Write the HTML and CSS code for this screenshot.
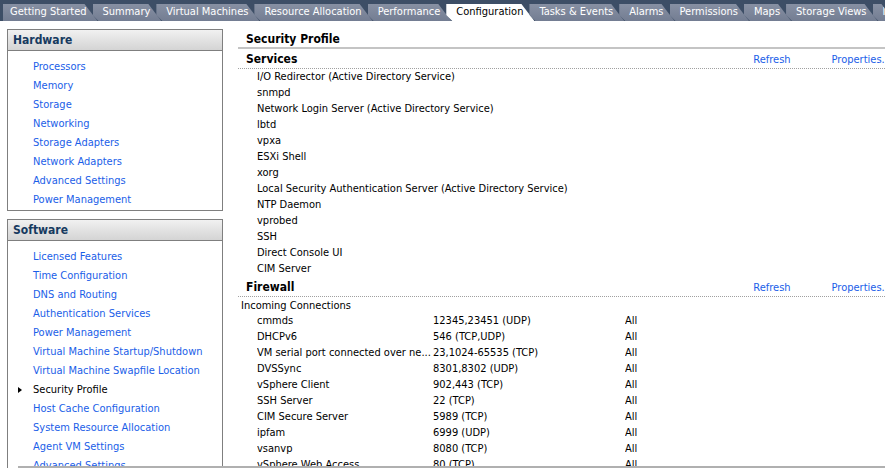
FILE: index.html
```html
<!DOCTYPE html>
<html lang="en">
<head>
    <meta charset="UTF-8">
    <title>Configuration - Security Profile</title>
    <link rel="stylesheet" href="styles.css">
</head>
<body>
    <div class="tab-bar">
        <div class="tab first">Getting Started</div>
        <div class="tab">Summary</div>
        <div class="tab">Virtual Machines</div>
        <div class="tab">Resource Allocation</div>
        <div class="tab">Performance</div>
        <div class="tab active">Configuration</div>
        <div class="tab">Tasks &amp; Events</div>
        <div class="tab">Alarms</div>
        <div class="tab">Permissions</div>
        <div class="tab">Maps</div>
        <div class="tab">Storage Views</div>
        <div class="tab more">I&#9666;</div>
    </div>

    <div class="page">
        <div class="sidebar">
            <div class="box">
                <div class="box-header">Hardware</div>
                <ul class="nav">
                    <li><a>Processors</a></li>
                    <li><a>Memory</a></li>
                    <li><a>Storage</a></li>
                    <li><a>Networking</a></li>
                    <li><a>Storage Adapters</a></li>
                    <li><a>Network Adapters</a></li>
                    <li><a>Advanced Settings</a></li>
                    <li><a>Power Management</a></li>
                </ul>
            </div>
            <div class="box software">
                <div class="box-header">Software</div>
                <ul class="nav">
                    <li><a>Licensed Features</a></li>
                    <li><a>Time Configuration</a></li>
                    <li><a>DNS and Routing</a></li>
                    <li><a>Authentication Services</a></li>
                    <li><a>Power Management</a></li>
                    <li><a>Virtual Machine Startup/Shutdown</a></li>
                    <li><a>Virtual Machine Swapfile Location</a></li>
                    <li class="current"><a>Security Profile</a></li>
                    <li><a>Host Cache Configuration</a></li>
                    <li><a>System Resource Allocation</a></li>
                    <li><a>Agent VM Settings</a></li>
                    <li><a>Advanced Settings</a></li>
                </ul>
            </div>
        </div>

        <div class="content">
            <h1 class="title">Security Profile</h1>

            <div class="section-head">
                <h2>Services</h2>
                <a class="action refresh">Refresh</a>
                <a class="action props">Properties...</a>
            </div>
            <ul class="services">
                <li>I/O Redirector (Active Directory Service)</li>
                <li>snmpd</li>
                <li>Network Login Server (Active Directory Service)</li>
                <li>lbtd</li>
                <li>vpxa</li>
                <li>ESXi Shell</li>
                <li>xorg</li>
                <li>Local Security Authentication Server (Active Directory Service)</li>
                <li>NTP Daemon</li>
                <li>vprobed</li>
                <li>SSH</li>
                <li>Direct Console UI</li>
                <li>CIM Server</li>
            </ul>

            <div class="section-head">
                <h2>Firewall</h2>
                <a class="action refresh">Refresh</a>
                <a class="action props">Properties...</a>
            </div>
            <div class="subhead">Incoming Connections</div>
            <div class="rules">
                <span>cmmds</span><span>12345,23451 (UDP)</span><span>All</span>
                <span>DHCPv6</span><span>546 (TCP,UDP)</span><span>All</span>
                <span>VM serial port connected over ne...</span><span>23,1024-65535 (TCP)</span><span>All</span>
                <span>DVSSync</span><span>8301,8302 (UDP)</span><span>All</span>
                <span>vSphere Client</span><span>902,443 (TCP)</span><span>All</span>
                <span>SSH Server</span><span>22 (TCP)</span><span>All</span>
                <span>CIM Secure Server</span><span>5989 (TCP)</span><span>All</span>
                <span>ipfam</span><span>6999 (UDP)</span><span>All</span>
                <span>vsanvp</span><span>8080 (TCP)</span><span>All</span>
                <span>vSphere Web Access</span><span>80 (TCP)</span><span>All</span>
            </div>
        </div>
    </div>
    <div class="hscroll"></div>
</body>
</html>
```

FILE: styles.css
```css
* {
    margin: 0;
    padding: 0;
    box-sizing: border-box;
}

body {
    font-family: 'DejaVu Sans Condensed', 'DejaVu Sans', sans-serif;
    font-size: 11px;
    color: #000;
    background: #fff;
    width: 885px;
    height: 468px;
    overflow: hidden;
    position: relative;
}

/* tab strip */
.tab-bar {
    display: flex;
    height: 21px;
    padding: 4px 0 0 3px;
    background: #3d4e66;
    overflow: hidden;
    white-space: nowrap;
}

.tab {
    flex: none;
    height: 17px;
    line-height: 16px;
    padding: 0 11px 0 10px;
    margin-left: -5px;
    color: #fff;
    background: linear-gradient(#8790a3, #737d92);
    clip-path: polygon(0 0, calc(100% - 13px) 0, 100% 100%, 6px 100%, 0 65%);
}

.tab.first {
    margin-left: 0;
    padding-left: 7px;
    clip-path: polygon(0 0, calc(100% - 13px) 0, 100% 100%, 0 100%);
}

.tab.active {
    background: #fff;
    color: #000;
}

.tab.more {
    padding-right: 4px;
}

/* layout */
.page {
    display: flex;
    padding-top: 8px;
}

.sidebar {
    width: 238px;
    flex: none;
    padding-left: 7px;
}

.box {
    width: 216px;
    border: 1px solid #7f7f7f;
    margin-bottom: 8px;
    padding-bottom: 1px;
}

.box-header {
    height: 21px;
    line-height: 20px;
    padding-left: 5px;
    font-weight: bold;
    font-size: 12px;
    color: #163a5f;
    background: linear-gradient(#f1f1f1, #d4d4d4);
    border-bottom: 1px solid #7f7f7f;
}

.nav {
    list-style: none;
    padding-top: 6px;
}

.nav li {
    height: 19px;
    line-height: 19px;
    padding-left: 25px;
    position: relative;
}

.nav a {
    color: #1a5ee8;
}

.nav li.current a {
    color: #000;
}

.nav li.current::before {
    content: "";
    position: absolute;
    left: 10px;
    top: 7px;
    border-left: 4px solid #000;
    border-top: 3px solid transparent;
    border-bottom: 3px solid transparent;
}

.software {
    height: 260px;
    overflow: hidden;
}

/* content */
.content {
    flex: 1;
}

.title {
    font-size: 12px;
    font-weight: bold;
    height: 20px;
    line-height: 20px;
    padding-left: 8px;
    border-bottom: 2px solid #c4c4c4;
}

.section-head {
    display: flex;
    height: 20px;
    line-height: 21px;
    padding-left: 8px;
    border-bottom: 1px dotted #a0a0a0;
}

.section-head h2 {
    flex: 1;
    font-size: 12px;
    font-weight: bold;
}

.action {
    color: #1a5ee8;
}

.refresh {
    margin-right: 41px;
}

.props {
    margin-right: -6px;
}

.services {
    list-style: none;
    padding-left: 19px;
}

.services li {
    height: 16px;
    line-height: 16px;
}

.subhead {
    height: 16px;
    line-height: 18px;
    padding-left: 3px;
}

.rules {
    display: grid;
    grid-template-columns: 176px 192px 1fr;
    grid-auto-rows: 16px;
    line-height: 16px;
    padding-left: 19px;
}

.rules span {
    white-space: nowrap;
    overflow: hidden;
}

.hscroll {
    position: absolute;
    left: 18px;
    right: 0;
    bottom: 0;
    height: 2px;
    background: #b0b0b0;
}
```
